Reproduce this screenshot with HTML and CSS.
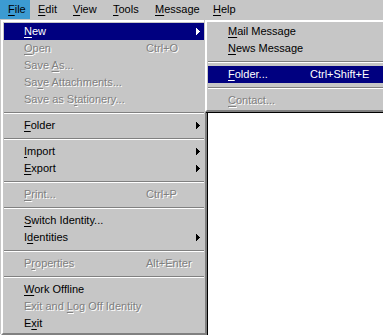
FILE: index.html
```html
<!DOCTYPE html>
<html lang="en">
<head>
    <meta charset="UTF-8">
    <title>File menu</title>
    <link rel="stylesheet" href="styles.css">
</head>
<body>
    <div class="menubar">
        <div class="bar-item open"><u>F</u>ile</div>
        <div class="bar-item"><u>E</u>dit</div>
        <div class="bar-item"><u>V</u>iew</div>
        <div class="bar-item"><u>T</u>ools</div>
        <div class="bar-item"><u>M</u>essage</div>
        <div class="bar-item"><u>H</u>elp</div>
    </div>

    <!-- File menu -->
    <div class="menu main-menu">
        <div class="item active"><span><u>N</u>ew</span><span></span><svg class="arrow" width="4" height="7" viewBox="0 0 4 7"><path d="M0 0h1v7h-1z M1 1h1v5h-1z M2 2h1v3h-1z M3 3h1v1h-1z"/></svg></div>
        <div class="item disabled"><span><u>O</u>pen</span><span>Ctrl+O</span></div>
        <div class="item disabled"><span>Save <u>A</u>s...</span></div>
        <div class="item disabled"><span>Sa<u>v</u>e Attachments...</span></div>
        <div class="item disabled"><span>Save as S<u>t</u>ationery...</span></div>
        <div class="sep"></div>
        <div class="item"><span><u>F</u>older</span><span></span><svg class="arrow" width="4" height="7" viewBox="0 0 4 7"><path d="M0 0h1v7h-1z M1 1h1v5h-1z M2 2h1v3h-1z M3 3h1v1h-1z"/></svg></div>
        <div class="sep"></div>
        <div class="item"><span><u>I</u>mport</span><span></span><svg class="arrow" width="4" height="7" viewBox="0 0 4 7"><path d="M0 0h1v7h-1z M1 1h1v5h-1z M2 2h1v3h-1z M3 3h1v1h-1z"/></svg></div>
        <div class="item"><span><u>E</u>xport</span><span></span><svg class="arrow" width="4" height="7" viewBox="0 0 4 7"><path d="M0 0h1v7h-1z M1 1h1v5h-1z M2 2h1v3h-1z M3 3h1v1h-1z"/></svg></div>
        <div class="sep"></div>
        <div class="item disabled"><span><u>P</u>rint...</span><span>Ctrl+P</span></div>
        <div class="sep"></div>
        <div class="item"><span><u>S</u>witch Identity...</span></div>
        <div class="item"><span>I<u>d</u>entities</span><span></span><svg class="arrow" width="4" height="7" viewBox="0 0 4 7"><path d="M0 0h1v7h-1z M1 1h1v5h-1z M2 2h1v3h-1z M3 3h1v1h-1z"/></svg></div>
        <div class="sep"></div>
        <div class="item disabled"><span>P<u>r</u>operties</span><span>Alt+Enter</span></div>
        <div class="sep"></div>
        <div class="item"><span><u>W</u>ork Offline</span></div>
        <div class="item disabled"><span>Exit and <u>L</u>og Off Identity</span></div>
        <div class="item"><span>E<u>x</u>it</span></div>
    </div>

    <!-- New submenu -->
    <div class="menu sub-menu">
        <div class="item"><span><u>M</u>ail Message</span></div>
        <div class="item"><span><u>N</u>ews Message</span></div>
        <div class="sep"></div>
        <div class="item active"><span><u>F</u>older...</span><span>Ctrl+Shift+E</span></div>
        <div class="sep"></div>
        <div class="item disabled"><span><u>C</u>ontact...</span></div>
    </div>
</body>
</html>
```

FILE: styles.css
```css
body {
    margin: 0;
    width: 383px;
    height: 335px;
    overflow: hidden;
    position: relative;
    background: #ffffff;
    font-family: "Liberation Sans", Arial, sans-serif;
    font-size: 11px;
    color: #000000;
}

u {
    text-decoration-thickness: 1px;
    text-underline-offset: 2px;
}

.menubar {
    display: grid;
    grid-template-columns: 30px 35px 40px 42px 58px 1fr;
    height: 19px;
    line-height: 19px;
    background: #c6c6c6;
}

.bar-item {
    padding-left: 8px;
    white-space: nowrap;
}

.bar-item.open {
    background: #3c9bd2;
}

.menu {
    position: absolute;
    top: 19px;
    background: #c6c6c6;
    padding: 1px;
    border: 2px solid;
    border-color: #ffffff #808080 #808080 #ffffff;
    box-shadow: -1px -1px 0 #c6c6c6, 1px 1px 0 #000000;
    margin: 1px 0 0 1px;
    box-sizing: border-box;
}

.main-menu {
    left: 0;
    width: 206px;
}

.sub-menu {
    left: 204px;
    width: 200px;
}

.item {
    display: grid;
    grid-template-columns: 122px 50px 8px;
    align-items: center;
    height: 17px;
    line-height: 17px;
    padding-left: 20px;
    white-space: nowrap;
}

.sub-menu .item {
    grid-template-columns: 82px 90px;
}

.item.active {
    background: #000080;
    color: #ffffff;
}

.item.disabled {
    color: #808080;
    text-shadow: 1px 1px 0 #ffffff;
}

.arrow {
    fill: currentColor;
    display: block;
}

.sep {
    height: 9px;
    box-sizing: border-box;
    padding-top: 4px;
}

.sep::before {
    content: "";
    display: block;
    height: 0;
    border-top: 1px solid #808080;
    border-bottom: 1px solid #ffffff;
}
```
